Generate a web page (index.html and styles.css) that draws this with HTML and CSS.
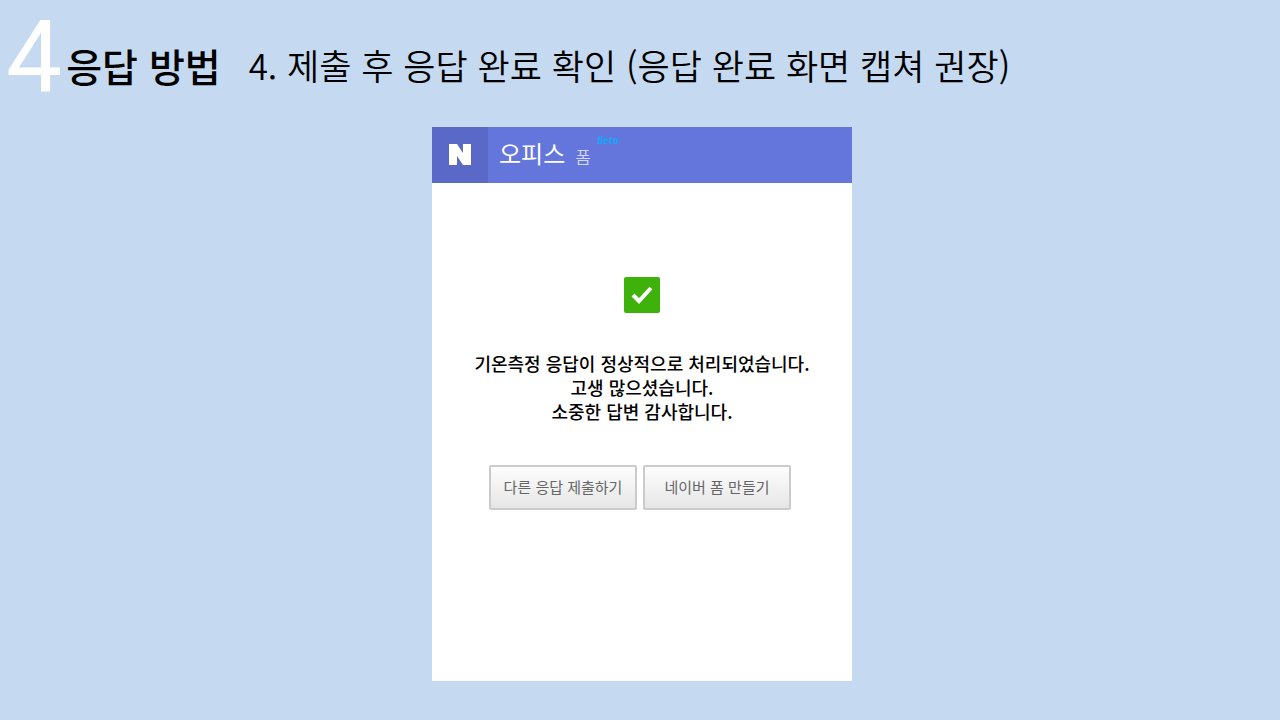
FILE: index.html
```html
<!DOCTYPE html>
<html lang="ko">
<head>
  <meta charset="UTF-8">
  <meta name="viewport" content="width=device-width, initial-scale=1.0">
  <title>응답 방법</title>
  <link rel="stylesheet" href="styles.css">
</head>
<body>
  <header class="page-header">
    <span class="step-number">4</span>
    <h1 class="page-title">응답 방법</h1>
    <p class="page-subtitle">4. 제출 후 응답 완료 확인 (응답 완료 화면 캡쳐 권장)</p>
  </header>

  <main class="container">
    <section class="form-card">
      <div class="form-bar">
        <a class="logo" href="#" aria-label="네이버">
          <svg width="24" height="22" viewBox="0 0 24 22" aria-hidden="true">
            <path fill="#fff" d="M1 0h8l6 9V0h8v21h-8L9 12v9H1z"/>
          </svg>
        </a>
        <a class="office" href="#">오피스</a>
        <span class="form-name">폼</span>
        <span class="beta">Beta</span>
      </div>

      <div class="form-body">
        <svg class="check" width="36" height="36" viewBox="0 0 36 36" aria-hidden="true">
          <rect width="36" height="36" rx="2" fill="#3fb10b"/>
          <path d="M9 18l6 6L27 11" fill="none" stroke="#fff" stroke-width="4"/>
        </svg>
        <p class="message">
          기온측정 응답이 정상적으로 처리되었습니다.<br>
          고생 많으셨습니다.<br>
          소중한 답변 감사합니다.
        </p>
        <div class="buttons">
          <button type="button">다른 응답 제출하기</button>
          <button type="button">네이버 폼 만들기</button>
        </div>
      </div>
    </section>
  </main>
</body>
</html>
```
FILE: styles.css
```css
* {
  box-sizing: border-box;
}

body {
  margin: 0;
  min-height: 100vh;
  background-color: #c5daf0;
  color: #000;
  font-family: "Noto Sans CJK KR", sans-serif;
}

.page-header {
  display: flex;
  align-items: flex-end;
  height: 127px;
  padding: 0 6px 22px;
}

.step-number {
  color: #fff;
  font-family: Roboto, sans-serif;
  font-size: 100px;
  font-weight: 400;
  line-height: 94px;
}

.page-title {
  margin: 0 28px 0 4px;
  font-size: 39px;
  font-weight: 500;
  line-height: 80px;
}

.page-subtitle {
  margin: 0;
  font-size: 35px;
  font-weight: 350;
  line-height: 80px;
}

.container {
  display: flex;
  justify-content: center;
  padding: 0 0 36px 4px;
}

.form-card {
  width: 100%;
  max-width: 420px;
  background-color: #fff;
}

.form-bar {
  display: flex;
  align-items: center;
  height: 56px;
  background-color: #6475dc;
  color: #fff;
}

.logo {
  display: flex;
  align-items: center;
  justify-content: center;
  width: 56px;
  height: 56px;
  background-color: #5a68c7;
}

.office {
  height: 56px;
  margin-left: 11px;
  color: #fff;
  font-size: 24px;
  line-height: 52px;
  text-decoration: none;
}

.form-name {
  margin: 2px 6px 0 10px;
  color: #d3d8f7;
  font-size: 17px;
  font-weight: 350;
}

.beta {
  align-self: flex-start;
  margin-top: 6px;
  color: #1ba4f5;
  font-family: "Open Sans", sans-serif;
  font-size: 10px;
  font-style: italic;
  font-weight: 700;
  line-height: 14px;
}

.form-body {
  display: flex;
  flex-direction: column;
  align-items: center;
  padding: 94px 20px 171px;
}

.message {
  margin: 38px 0 42px;
  font-size: 18px;
  font-weight: 500;
  line-height: 24px;
  text-align: center;
}

.buttons {
  display: flex;
  gap: 6px;
  margin-right: 4px;
}

.buttons button {
  width: 148px;
  height: 45px;
  padding: 0 0 2px;
  border: 2px solid #cbcbcb;
  border-radius: 2px;
  background: linear-gradient(#fdfdfd, #e6e6e6);
  color: #666;
  font-family: inherit;
  font-size: 15px;
  cursor: pointer;
}
```
